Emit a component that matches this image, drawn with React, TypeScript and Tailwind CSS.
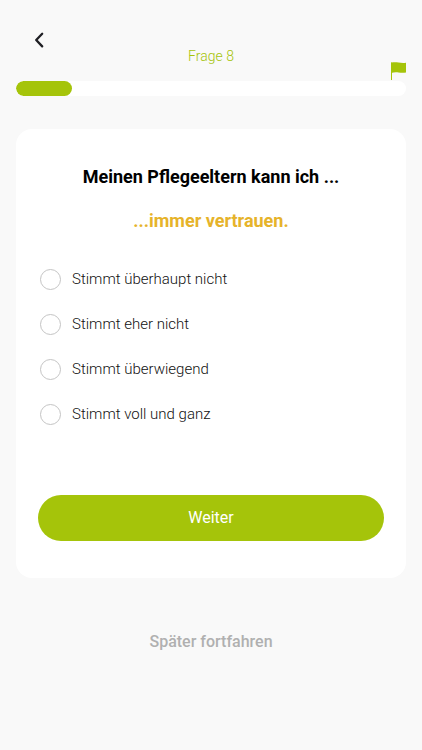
import { useState } from "react";

const ANSWERS = [
  "Stimmt überhaupt nicht",
  "Stimmt eher nicht",
  "Stimmt überwiegend",
  "Stimmt voll und ganz",
];

const QUESTION = 8;
const TOTAL = 56;

const Header = () => (
  <header>
    <div className="grid h-[52px] grid-cols-3">
      <button
        type="button"
        aria-label="Zurück"
        className="ml-3 flex size-6 items-center justify-center self-start cursor-pointer"
      >
        <svg
          viewBox="0 0 24 24"
          className="size-6"
          fill="none"
          stroke="#1f1f24"
          strokeWidth="2.3"
          strokeLinecap="round"
          strokeLinejoin="round"
        >
          <path d="M14.200 5.800 8.200 12l6 6.400" />
        </svg>
      </button>
      <h1 className="mb-3.5 self-end text-center text-sm leading-5 font-light text-[#a5c40a]">
        Frage {QUESTION}
      </h1>
      <svg
        viewBox="0 0 15 18"
        className="h-[18px] w-[15px] self-end justify-self-end"
        fill="#a5c40a"
      >
        <path d="M0 .5h1V18H0z" />
        <path d="M0 .7C2.500.2 5 .2 7.500.6c2.500.4 5 .5 7.500.2v9.800c-2.800.4-5 .3-7.500-.1-2.500-.3-4.500-.2-7.500.4z" />
      </svg>
    </div>
    {/* Progress */}
    <div className="mt-px h-[15px] overflow-hidden rounded-full bg-white">
      <div
        className="h-full rounded-full bg-[#a5c40a]"
        style={{ width: `${(QUESTION / TOTAL) * 100}%` }}
      />
    </div>
  </header>
);

const App = () => {
  const [answer, setAnswer] = useState("");

  return (
    <div className="min-h-screen bg-[#f9f9f9] px-4 pt-7 pb-8 font-['Roboto',sans-serif]">
      <Header />

      <main>
        <form
          onSubmit={(e) => e.preventDefault()}
          className="mt-[33px] rounded-2xl bg-white px-[22px] pt-9 pb-[37px]"
        >
          <fieldset>
            <legend className="w-full text-center text-lg leading-6 font-bold text-black">
              <span className="block">Meinen Pflegeeltern kann ich ...</span>
              <span className="mt-5 block text-[#e6b32a]">
                ...immer vertrauen.
              </span>
            </legend>

            {/* Answers */}
            <div className="mt-9 flex flex-col gap-6 pl-0.5">
              {ANSWERS.map((text) => (
                <label
                  key={text}
                  className="flex h-[21px] items-center gap-[11px] text-[15px] font-light text-[#111111] cursor-pointer"
                >
                  <input
                    type="radio"
                    name="answer"
                    value={text}
                    checked={answer === text}
                    onChange={() => setAnswer(text)}
                    className="size-[21px] flex-none appearance-none rounded-full border border-[#c4c4c4] bg-white checked:border-[6px] checked:border-[#a5c40a]"
                  />
                  {text}
                </label>
              ))}
            </div>
          </fieldset>

          <button
            type="submit"
            className="mt-[70px] h-[46px] w-full rounded-full bg-[#a5c40a] text-base text-white cursor-pointer"
          >
            Weiter
          </button>
        </form>

        <button
          type="button"
          className="mx-auto mt-[52px] block text-base leading-6 font-medium text-[#b0b0b0] cursor-pointer"
        >
          Später fortfahren
        </button>
      </main>
    </div>
  );
};

export default App;
